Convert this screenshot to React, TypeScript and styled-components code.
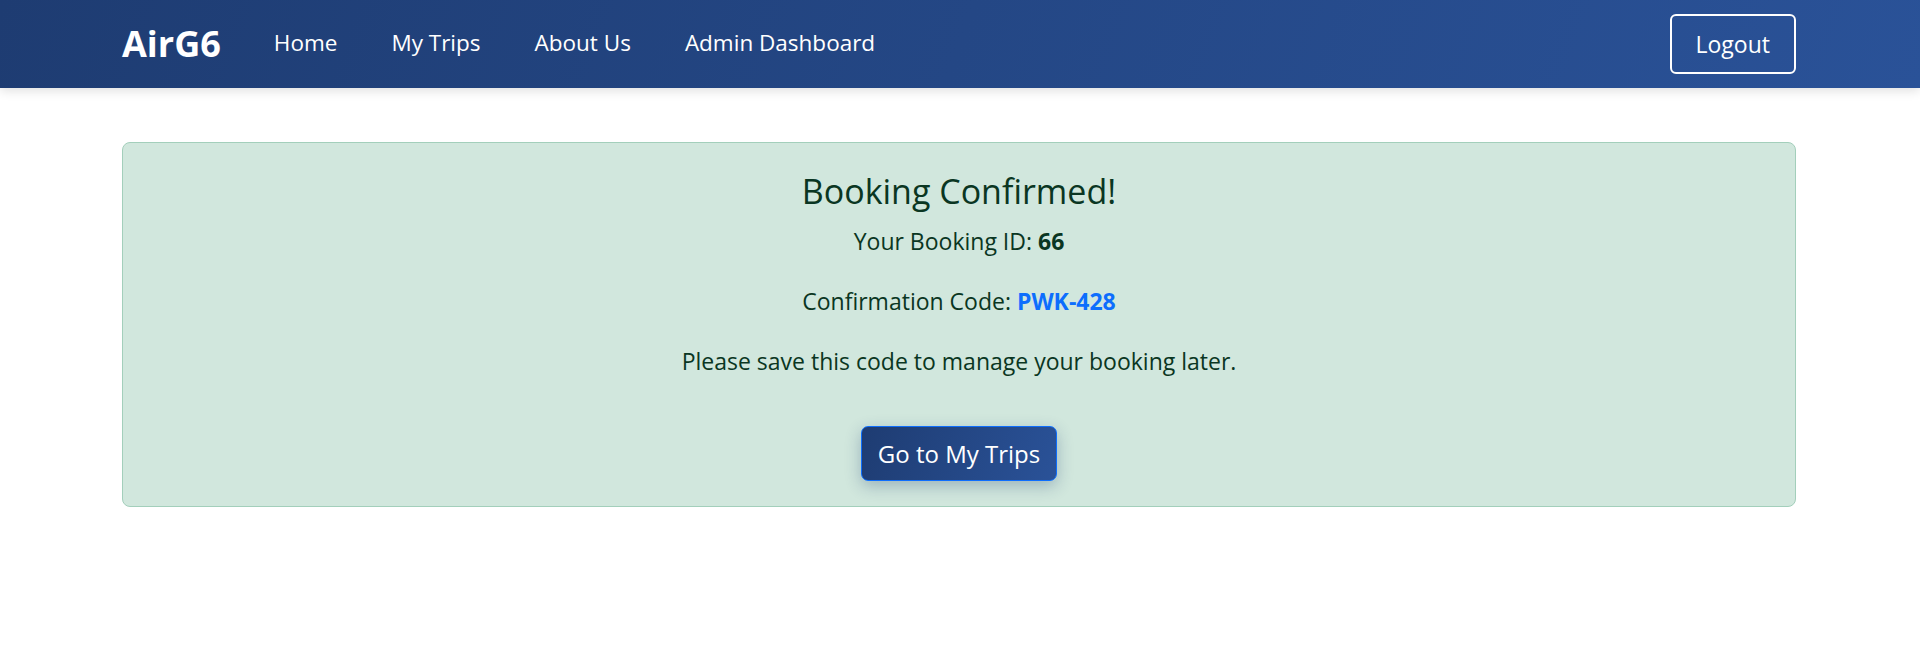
import styled, { createGlobalStyle } from "styled-components"

const GlobalStyle = createGlobalStyle`
  body {
    margin: 0;
    background: #fff;
    font-family: "Open Sans", Lato, sans-serif;
    color: #212529;
  }
  * { box-sizing: border-box; }
`

const StyledNav = styled.nav`
  height: 88px;
  background: linear-gradient(110deg, #1e3c72 0%, #2a5298 100%);
  box-shadow: 0 3px 10px rgba(0, 0, 0, 0.12);
  display: flex;
  align-items: center;
  padding: 0 124px 0 122px;

  .brand {
    font-size: 36px;
    font-weight: 700;
    color: #fff;
    text-decoration: none;
    margin-right: 26px;
    line-height: 1;
  }

  .nav-list {
    list-style: none;
    display: flex;
    margin: 0;
    padding: 0;
    flex: 1;
  }

  .nav-link {
    display: block;
    padding: 0 27px;
    font-size: 22.5px;
    line-height: 32px;
    margin-top: -2px;
    color: #fff;
    text-decoration: none;
  }
`

const OutlineButton = styled.button`
  font-family: inherit;
  font-size: 23px;
  line-height: 34px;
  color: #fff;
  background: transparent;
  border: 2px solid #fff;
  border-radius: 6px;
  padding: 11px 24px;
`

const Main = styled.main`
  padding: 54px 124px 0 122px;
`

const SuccessAlert = styled.div`
  background: #d1e7dd;
  border: 1px solid #a3cfbb;
  border-radius: 8px;
  color: #0a3622;
  padding: 28px 20px 25px;
  display: flex;
  flex-direction: column;
  align-items: center;
  text-align: center;

  h4 {
    font-size: 34px;
    font-weight: 400;
    line-height: 40px;
    margin: 0 0 14px;
  }

  p {
    font-size: 23px;
    line-height: 33px;
    margin: 0 0 27px;
  }

  p:last-of-type {
    margin-bottom: 48px;
  }

  .code {
    color: #0d6efd;
  }
`

const PrimaryButton = styled.button`
  font-family: inherit;
  font-size: 24px;
  line-height: 33px;
  color: #fff;
  background: linear-gradient(110deg, #1e3c72 0%, #2a5298 100%);
  border: 1px solid #0d6efd;
  border-radius: 7px;
  padding: 10px 16px;
  box-shadow: 0 5px 16px rgba(30, 60, 114, 0.3);
`

export default function App() {
  return (
    <>
      <GlobalStyle />
      <StyledNav>
        <a href="#" className="brand">AirG6</a>
        <ul className="nav-list">
          <li><a href="#" className="nav-link">Home</a></li>
          <li><a href="#" className="nav-link">My Trips</a></li>
          <li><a href="#" className="nav-link">About Us</a></li>
          <li><a href="#" className="nav-link">Admin Dashboard</a></li>
        </ul>
        <OutlineButton>Logout</OutlineButton>
      </StyledNav>
      <Main>
        <SuccessAlert>
          <h4>Booking Confirmed!</h4>
          <p>Your Booking ID: <strong>66</strong></p>
          <p>Confirmation Code: <strong className="code">PWK-428</strong></p>
          <p>Please save this code to manage your booking later.</p>
          <PrimaryButton>Go to My Trips</PrimaryButton>
        </SuccessAlert>
      </Main>
    </>
  )
}
